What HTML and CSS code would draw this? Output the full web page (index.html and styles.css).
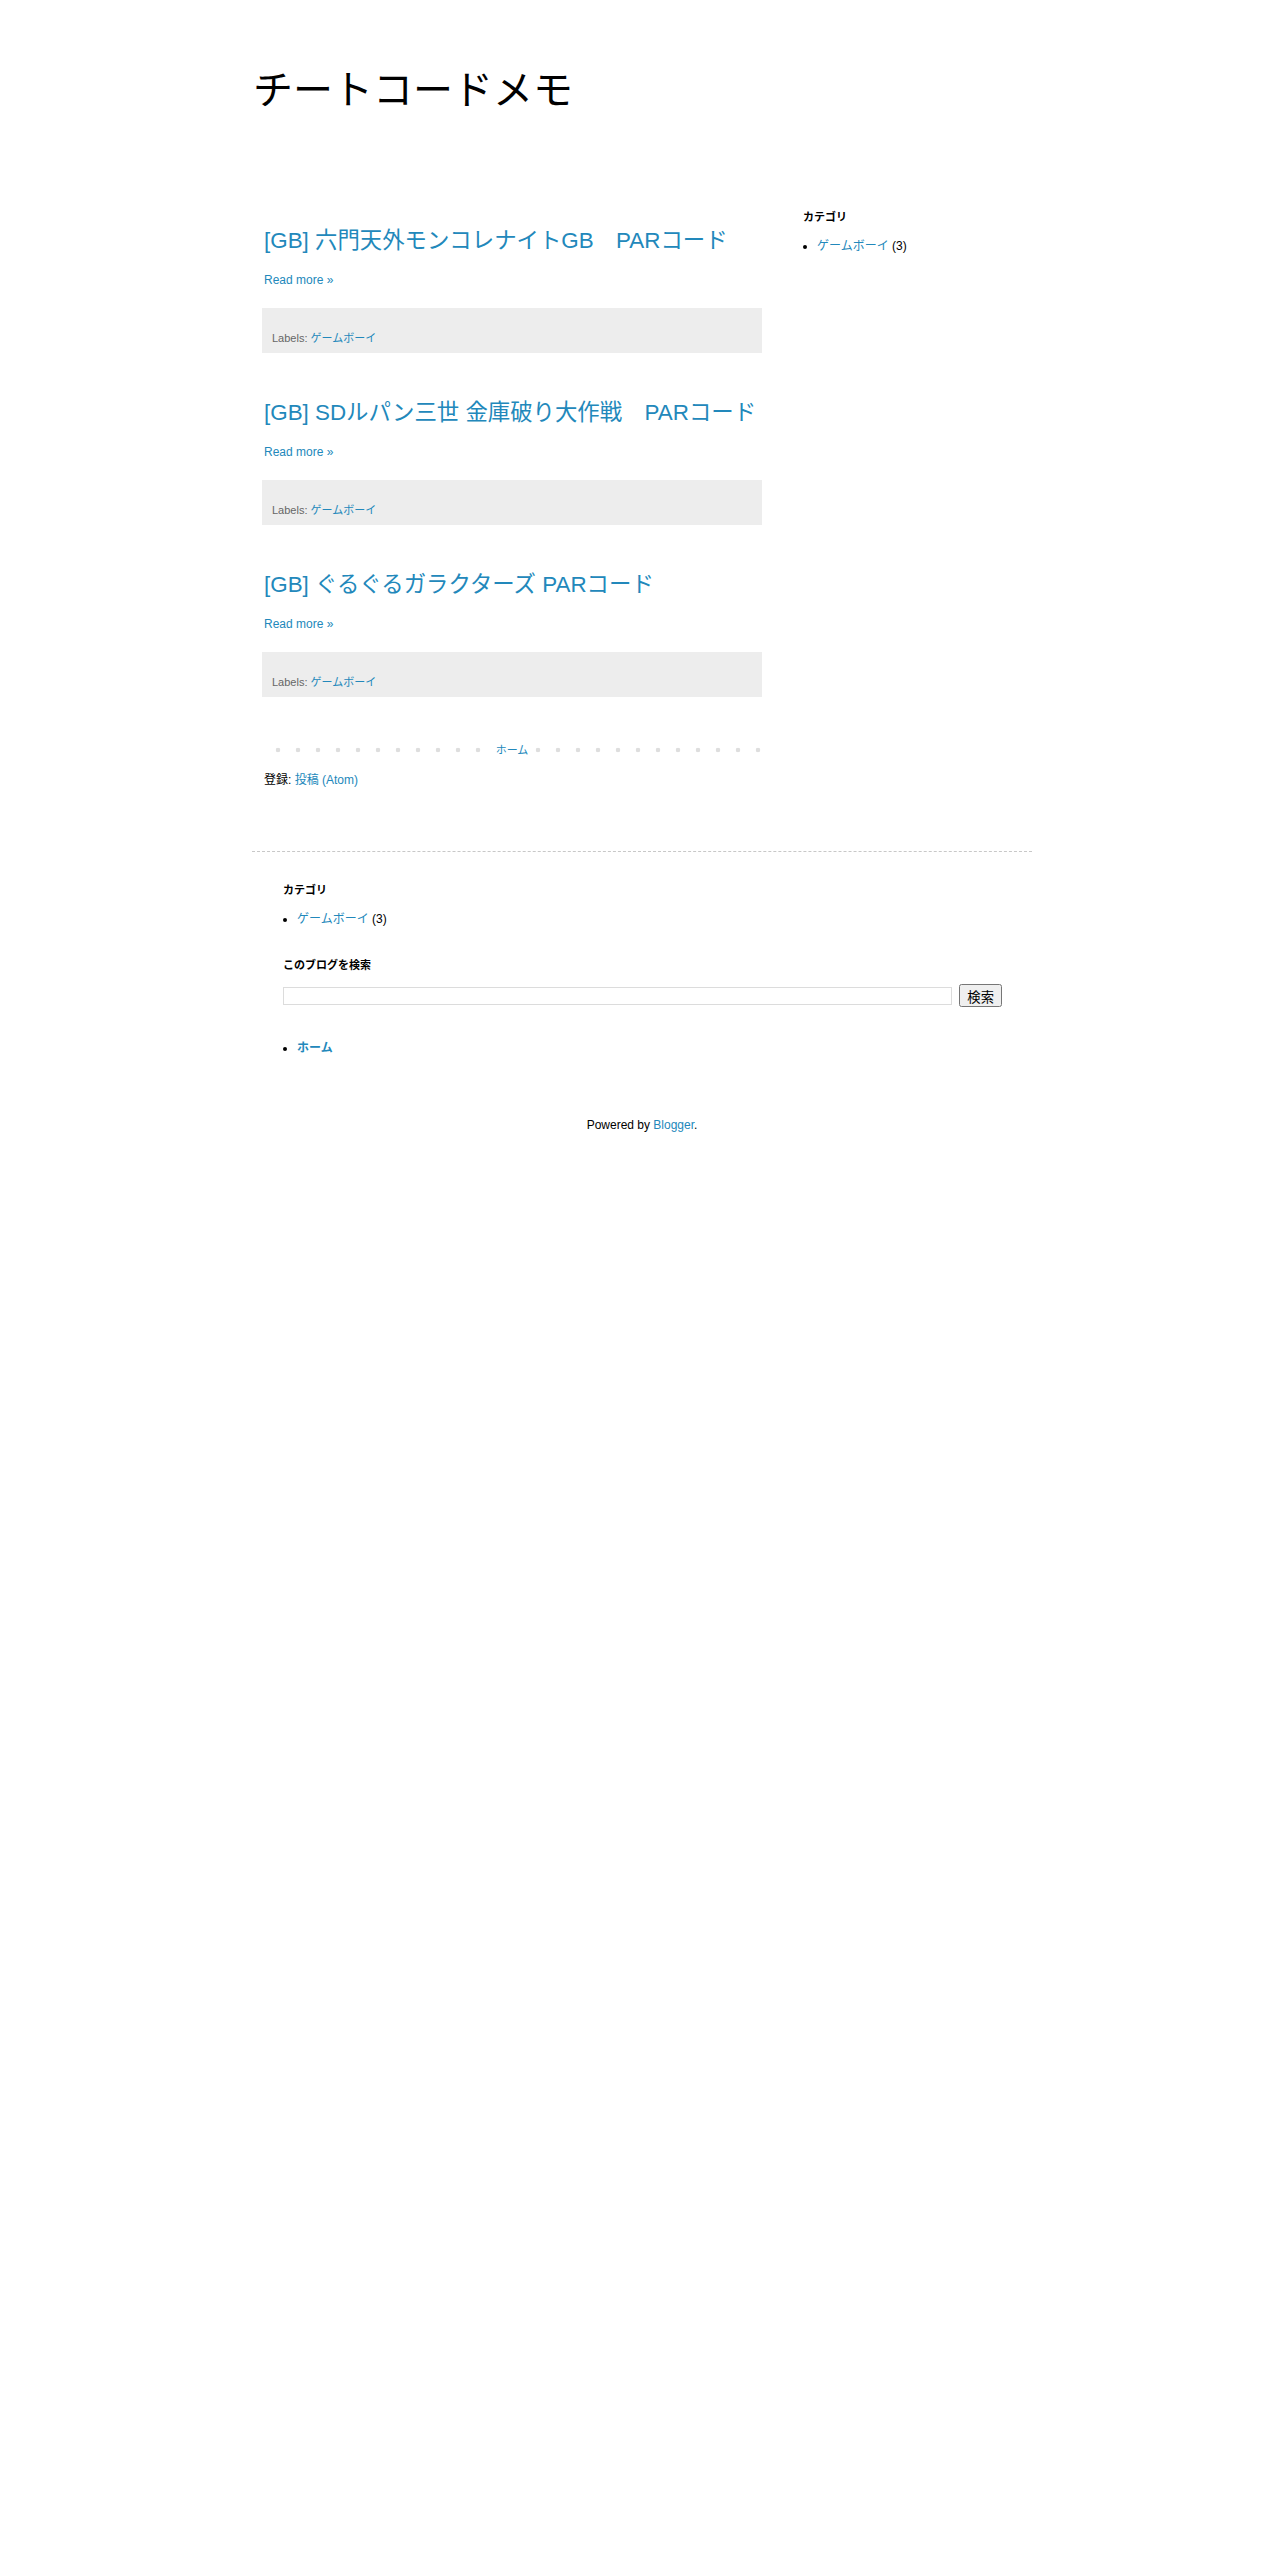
FILE: index.html
```html
<!DOCTYPE html>
<html lang="ja">
  <head>
    <meta charset="UTF-8" />
    <meta name="viewport" content="width=device-width, initial-scale=1.0" />

    <link rel="stylesheet" href="styles.css">

    <title>チートコードメモ</title>
  </head>
  <body>
    <div class="outer">
      <header class="header">
        <h1 class="blog-title">チートコードメモ</h1>
      </header>

      <div class="columns">
        <main class="main">
          <article class="post">
            <h3 class="post-title"><a href="#">[GB] 六門天外モンコレナイトGB　PARコード</a></h3>
            <div class="jump-link"><a href="#">Read more »</a></div>
            <div class="post-footer">Labels: <a href="#">ゲームボーイ</a></div>
          </article>
          <article class="post">
            <h3 class="post-title"><a href="#">[GB] SDルパン三世 金庫破り大作戦　PARコード</a></h3>
            <div class="jump-link"><a href="#">Read more »</a></div>
            <div class="post-footer">Labels: <a href="#">ゲームボーイ</a></div>
          </article>
          <article class="post">
            <h3 class="post-title"><a href="#">[GB] ぐるぐるガラクターズ PARコード</a></h3>
            <div class="jump-link"><a href="#">Read more »</a></div>
            <div class="post-footer">Labels: <a href="#">ゲームボーイ</a></div>
          </article>

          <div class="pager"><a class="home-link" href="#">ホーム</a></div>
          <div class="feed">登録: <a href="#">投稿 (Atom)</a></div>
        </main>

        <aside class="sidebar">
          <div class="widget">
            <h2>カテゴリ</h2>
            <ul>
              <li><a href="#">ゲームボーイ</a> (3)</li>
            </ul>
          </div>
        </aside>
      </div>

      <footer class="footer">
        <div class="widget">
          <h2>カテゴリ</h2>
          <ul>
            <li><a href="#">ゲームボーイ</a> (3)</li>
          </ul>
        </div>
        <div class="widget search">
          <h2>このブログを検索</h2>
          <form class="search-row" onsubmit="return false">
            <input class="search-box" type="text" />
            <button class="search-btn" type="submit">検索</button>
          </form>
        </div>
        <div class="widget pages">
          <ul>
            <li class="selected"><a href="#">ホーム</a></li>
          </ul>
        </div>
      </footer>

      <div class="attribution">Powered by <a href="#">Blogger</a>.</div>
    </div>
  </body>
</html>
```

FILE: styles.css
```css
body {
  margin: 0;
  background-color: #fff;
  color: #222;
  font: 12px "Liberation Sans", Arial, "Noto Sans CJK JP", sans-serif;
}

a {
  color: #2288bb;
  text-decoration: none;
}

.outer {
  width: 780px;
  margin: 0 auto;
}

/* header */
.header {
  padding-top: 66px;
}

.blog-title {
  margin: 0 0 0 1px;
  font-size: 40px;
  line-height: 48px;
  font-weight: normal;
  color: #000;
}

/* columns */
.columns {
  display: flex;
}

.main {
  width: 500px;
  margin-left: 10px;
  padding-top: 113px;
}

.sidebar {
  width: 200px;
  margin-left: 41px;
  padding-top: 96px;
}

/* posts */
.post {
  margin-bottom: 46px;
}

.post-title {
  margin: 0;
  padding-left: 2px;
  font-size: 22.4px;
  line-height: 28px;
  font-weight: normal;
}

.jump-link {
  margin-top: 17px;
  padding-left: 2px;
  line-height: 16px;
}

.post-footer {
  margin-top: 20px;
  height: 45px;
  box-sizing: border-box;
  padding: 22px 10px 0 10px;
  background-color: #ededed;
  color: #666;
  font-size: 11px;
  line-height: 16px;
}

/* pager */
.pager {
  height: 14px;
  line-height: 14px;
  text-align: center;
  font-size: 11px;
  background-image: radial-gradient(circle at 50% 50%, #dedede 0, #dedede 2px, rgba(255, 255, 255, 0) 2.6px);
  background-size: 20px 14px;
  background-position: 6px 0;
  background-repeat: repeat-x;
}

.home-link {
  padding: 0 4px;
  background-color: #fff;
}

.feed {
  margin-top: 15px;
  padding-left: 2px;
  line-height: 16px;
  color: #000;
}

/* widgets */
.widget h2 {
  margin: 0;
  font-size: 11px;
  line-height: 14px;
  font-weight: bold;
  color: #000;
}

.widget ul {
  margin: 14px 0 0 0;
  padding-left: 14px;
  line-height: 16px;
  color: #000;
}

/* footer */
.footer {
  margin-top: 63px;
  padding: 31px 30px 0 31px;
  border-top: 1px dashed #c8c8c8;
}

.footer .search {
  margin-top: 31px;
}

.search-row {
  display: flex;
  align-items: center;
  gap: 7px;
  margin: 12px 0 0 0;
  height: 23px;
}

.search-box {
  flex: 1;
  height: 18px;
  box-sizing: border-box;
  margin: 0;
  border: 1px solid #dcdcdc;
  padding: 0 2px;
}

.search-btn {
  margin: 0;
  height: 23px;
  font-family: "Liberation Sans", Arial, "Noto Sans CJK JP", sans-serif;
}

.footer .pages {
  margin-top: 33px;
}

.pages ul {
  margin-top: 0;
}

.pages .selected a {
  font-weight: bold;
}

.attribution {
  margin-top: 61px;
  line-height: 16px;
  text-align: center;
  color: #000;
}
```
